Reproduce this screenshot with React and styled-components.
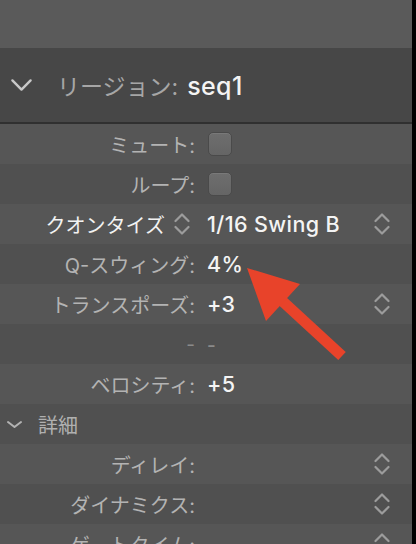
import React from "react";
import styled, { createGlobalStyle } from "styled-components";

const Global = createGlobalStyle`
  html, body { margin: 0; padding: 0; background: #000; }
  body { width: 416px; height: 544px; overflow: hidden; }
  * { box-sizing: border-box; }
`;

const FONT = `Inter, "Noto Sans CJK JP", "Noto Sans", sans-serif`;

const Screen = styled.div`
  position: relative;
  width: 416px;
  height: 544px;
  display: flex;
  overflow: hidden;
  font-family: ${FONT};
`;

const Panel = styled.div`
  width: 412px;
  height: 544px;
  display: flex;
  flex-direction: column;
  background: #555555;
`;

const Edge = styled.div`
  width: 4px;
  background: #000;
`;

const TopBar = styled.div`
  height: 48px;
  flex: none;
  background: #5a5a5a;
`;

const Header = styled.div`
  height: 76px;
  flex: none;
  background: #474747;
  border-bottom: 2px solid #303030;
  display: flex;
  align-items: center;
  padding-left: 10px;
  gap: 24px;
  font-size: 23px;
`;

const HeaderTitle = styled.div`
  display: flex;
  align-items: baseline;
  gap: 9px;
`;

const HeaderLabel = styled.span`
  color: #a6a6a6;
`;

const HeaderValue = styled.span`
  color: #f4f4f4;
  font-weight: 500;
  font-size: 25px;
  letter-spacing: 0.4px;
`;

const Row = styled.div`
  height: 40px;
  flex: none;
  display: grid;
  grid-template-columns: 195px 1fr 16px;
  column-gap: 14px;
  align-items: center;
  padding-right: 22px;
  background: ${(p) => (p.$dark ? "#505050" : "#565656")};
  font-size: 20px;
`;

const Label = styled.div`
  display: flex;
  justify-content: flex-end;
  align-items: center;
  gap: 9px;
  color: ${(p) => (p.$bright ? "#f2f2f2" : "#b3b3b3")};
  white-space: nowrap;
  padding-right: ${(p) => (p.$pad ? "5px" : "0")};
`;

const Value = styled.div`
  color: #f4f4f4;
  font-weight: 500;
  font-size: 21.5px;
  letter-spacing: 0.4px;
  white-space: nowrap;
  margin-left: -2px;
`;

const Dash = styled.span`
  color: #8a8a8a;
  font-size: 19px;
`;

const Check = styled.div`
  width: 24px;
  height: 24px;
  border-radius: 5px;
  background: linear-gradient(#6e6e6e, #656565);
  border: 1px solid #4a4a4a;
  box-shadow: inset 0 1px 0 rgba(255, 255, 255, 0.08);
  margin-left: -1px;
`;

const SectionRow = styled.div`
  height: 40px;
  flex: none;
  display: flex;
  align-items: center;
  gap: 15px;
  padding-left: 6px;
  background: ${(p) => (p.$dark ? "#505050" : "#565656")};
  font-size: 20px;
  color: #b0b0b0;
`;

const Overlay = styled.svg`
  position: absolute;
  left: 0;
  top: 0;
  pointer-events: none;
`;

const Stepper = ({ only }) => (
  <svg width="16" height="22" viewBox="0 0 16 22">
    <polyline
      points="1.5,8 8,1.5 14.5,8"
      fill="none"
      stroke="#9c9c9c"
      strokeWidth="2.2"
      strokeLinecap="round"
      strokeLinejoin="round"
    />
    {!only && (
      <polyline
        points="1.5,14 8,20.5 14.5,14"
        fill="none"
        stroke="#9c9c9c"
        strokeWidth="2.2"
        strokeLinecap="round"
        strokeLinejoin="round"
      />
    )}
  </svg>
);

const Chevron = ({ w, h, color, sw }) => (
  <svg width={w} height={h} viewBox={`0 0 ${w} ${h}`}>
    <polyline
      points={`${sw},${sw} ${w / 2},${h - sw} ${w - sw},${sw}`}
      fill="none"
      stroke={color}
      strokeWidth={sw}
      strokeLinecap="round"
      strokeLinejoin="round"
    />
  </svg>
);

export default function App() {
  return (
    <>
      <Global />
      <Screen>
        <Panel>
          <TopBar />
          <Header>
            <Chevron w={23} h={14} color="#c9c9c9" sw={2.4} />
            <HeaderTitle>
              <HeaderLabel>リージョン:</HeaderLabel>
              <HeaderValue>seq1</HeaderValue>
            </HeaderTitle>
          </Header>
          <Row>
            <Label>ミュート:</Label>
            <Check />
            <span />
          </Row>
          <Row $dark>
            <Label>ループ:</Label>
            <Check />
            <span />
          </Row>
          <Row>
            <Label $bright $pad>
              クオンタイズ
              <Stepper />
            </Label>
            <Value>1/16 Swing B</Value>
            <Stepper />
          </Row>
          <Row $dark>
            <Label>Q-スウィング:</Label>
            <Value>4%</Value>
            <span />
          </Row>
          <Row>
            <Label>トランスポーズ:</Label>
            <Value>+3</Value>
            <Stepper />
          </Row>
          <Row $dark>
            <Label>
              <Dash>-</Dash>
            </Label>
            <Value>
              <Dash>-</Dash>
            </Value>
            <span />
          </Row>
          <Row>
            <Label>ベロシティ:</Label>
            <Value>+5</Value>
            <span />
          </Row>
          <SectionRow $dark>
            <Chevron w={17} h={9} color="#b3b3b3" sw={2} />
            <span>詳細</span>
          </SectionRow>
          <Row>
            <Label>ディレイ:</Label>
            <span />
            <Stepper />
          </Row>
          <Row $dark>
            <Label>ダイナミクス:</Label>
            <span />
            <Stepper />
          </Row>
          <Row>
            <Label>ゲートタイム:</Label>
            <span />
            <Stepper />
          </Row>
        </Panel>
        <Edge />
        <Overlay width="416" height="544" viewBox="0 0 416 544">
          <line x1="279" y1="298" x2="342" y2="356" stroke="#e8432a" strokeWidth="11" />
          <polygon points="247,268 300,284 266,321" fill="#e8432a" />
        </Overlay>
      </Screen>
    </>
  );
}
